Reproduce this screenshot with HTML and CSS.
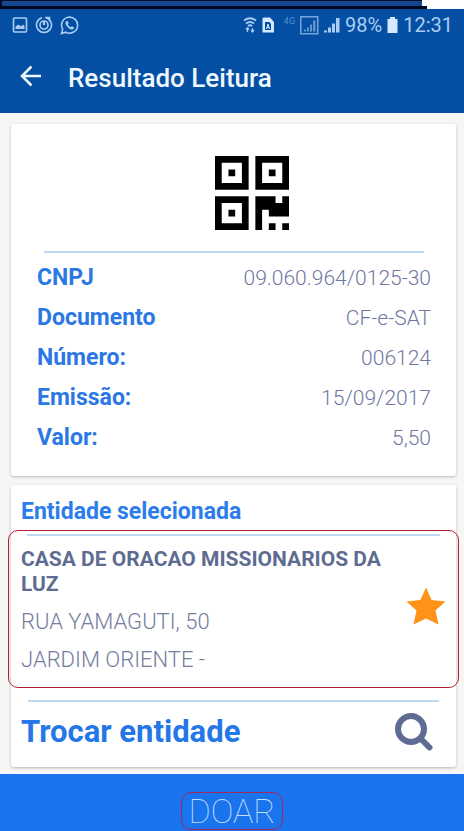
FILE: index.html
```html
<!DOCTYPE html>
<html lang="pt-BR">
<head>
<meta charset="utf-8">
<meta name="viewport" content="width=device-width, initial-scale=1">
<title>Resultado Leitura</title>
<link rel="stylesheet" href="styles.css">
</head>
<body>
<div class="top-edge"><div class="top-edge-line"></div><div class="top-edge-base"></div></div>
<header class="header">
  <div class="status">
    <div class="status-left">
      <svg width="16" height="18" viewBox="0 0 16 18" fill="none" stroke="currentColor" stroke-width="1.6"><rect x="1.5" y="2" width="13" height="14" rx="1"/><path d="M3.500 13V10.500l3-2 2.500 2 2-2 1.500 1.500v3z" fill="currentColor" stroke="none"/></svg>
      <svg width="18" height="18" viewBox="0 0 18 18" fill="none" stroke="currentColor" stroke-width="1.600"><path d="M7 1.700A7.500 7.500 0 1 0 11 1.700"/><path d="M10 1.500h4.500V5"/><circle cx="9" cy="9" r="4"/><path d="M9 5v4" stroke-width="2.200"/></svg>
      <svg width="19" height="19" viewBox="0 0 19 19" fill="none" stroke="currentColor" stroke-width="1.600"><path d="M1.500 17.500l1.200-4.300a8 8 0 1 1 3.100 3z"/><path d="M6.200 5.200l1.500-.3 1 2.300-.9 1.100c.7 1.400 1.700 2.300 3 2.900l1.100-1 2.100 1.100c0 1.700-1 2.300-2.100 2.300C8.800 13 5.500 9.800 5.400 6.800c0-.7.300-1.200.8-1.600z" fill="currentColor" stroke="none"/></svg>
    </div>
    <div class="status-right">
      <svg width="14" height="16" viewBox="0 0 14 16" fill="none" stroke="currentColor" stroke-width="1.800"><path d="M1 3.500q6-4.500 12 0M3 6.500q4-3 8 0M5 9q2-1.500 4 0"/><path d="M4.500 15v-4M3 12.500l1.500-1.800L6 12.500M9.500 11v4M8 13.200l1.500 1.800 1.500-1.800" stroke-width="1.300"/></svg>
      <svg class="sim" width="12" height="16" viewBox="0 0 12 16"><path d="M1.500.5H8L12 5v10.500H.5v-14z" fill="currentColor"/><path d="M3 5h4.500L9 7v6H3z" fill="#044fa3"/><path d="M4.500 12l1.500-5 1.500 5M5 10.500h2" fill="none" stroke="currentColor"/></svg>
      <span class="network">4G</span>
      <svg class="boxed" width="19" height="19" viewBox="0 0 19 19"><rect x=".8" y=".8" width="17" height="17" fill="none" stroke="currentColor" stroke-width="1.300"/><path d="M4 15.500v-2h2v2zm3 0v-4h2v4zm3 0v-7h2v7zm3 0v-11h2.500v11z" fill="currentColor" opacity=".7"/></svg>
      <svg width="16" height="16" viewBox="0 0 16 16" fill="currentColor"><path d="M0 15.500v-2h3v2zm4 0v-5h3v5zm4 0V6.500h3v9zm4 0V1h3.500v14.500z"/></svg>
      <span class="clock">98%</span>
      <svg class="battery" width="11" height="16" viewBox="0 0 11 16" fill="currentColor"><path d="M3 0h5v2h2.500v14H.5V2H3z"/></svg>
      <span class="clock">12:31</span>
    </div>
  </div>
  <div class="toolbar">
    <button class="icon-button" type="button" aria-label="Voltar"><svg width="22" height="22" viewBox="0 0 22 22" fill="none" stroke="currentColor" stroke-width="2.500"><path d="M21 11H2.500M11.500 1.500L2 11l9.500 9.500"/></svg></button>
    <h1>Resultado Leitura</h1>
  </div>
</header>
<main>
  <section class="card receipt">
    <div class="code"><svg width="74" height="74" viewBox="0 0 11 11" role="img" aria-label="QR Code" fill="#000"><path fill-rule="evenodd" d="M0 0h5v5H0zM1 1v3h3V1zM2 2h1v1H2zM6 0h5v5H6zM7 1v3h3V1zM8 2h1v1H8zM0 6h5v5H0zM1 7v3h3V7zM2 8h1v1H2z"/><path d="M6 6h3v1h1V6h1v3H8V8H7v3H6zM8 10h1v1H8zM10 10h1v1h-1z"/></svg></div>
    <hr>
    <dl>
      <div><dt>CNPJ</dt><dd>09.060.964/0125-30</dd></div>
      <div><dt>Documento</dt><dd>CF-e-SAT</dd></div>
      <div><dt>Número:</dt><dd>006124</dd></div>
      <div><dt>Emissão:</dt><dd>15/09/2017</dd></div>
      <div><dt>Valor:</dt><dd>5,50</dd></div>
    </dl>
  </section>
  <section class="card entity">
    <h2>Entidade selecionada</h2>
    <article class="selected">
      <hr>
      <div class="selected-body">
        <div class="details">
          <h3>CASA DE ORACAO MISSIONARIOS DA LUZ</h3>
          <p>RUA YAMAGUTI, 50</p>
          <p>JARDIM ORIENTE -</p>
        </div>
        <button class="icon-button" type="button" aria-label="Favorito"><svg width="40" height="38" viewBox="0 0 40 38" fill="#ff9218"><path d="M20 .5l5.600 12.600L39.500 14.500 29.500 23.500 32.500 37.500 20 31.500 7.500 37.500 10.500 23.500.5 14.500 14.400 13.100z"/></svg></button>
      </div>
    </article>
    <hr>
    <a class="change" href="#trocar"><span>Trocar entidade</span><svg width="38" height="38" viewBox="0 0 38 38" fill="none" stroke="#5e6b93"><circle cx="16" cy="16" r="13" stroke-width="6"/><path d="M26 26l8.500 8.500" stroke-width="6" stroke-linecap="round"/></svg></a>
  </section>
</main>
<footer><button class="donate" type="button">DOAR</button></footer>
</body>
</html>
```
FILE: styles.css
```css
* { box-sizing: border-box; }
body {
  margin: 0;
  min-height: 100vh;
  display: flex;
  flex-direction: column;
  background: #f6f6f7;
  font-family: Roboto, "Liberation Sans", sans-serif;
}
h1, h2, h3, p, dl, dd { margin: 0; }
button { padding: 0; border: 0; background: none; font: inherit; color: inherit; }
svg { display: block; flex: none; }
.top-edge { background: #fff; }
.top-edge-line {
  width: 91%;
  height: 6px;
  background: #15468f;
  border-top: 1px solid #020a24;
  border-left: 2px solid #020a24;
}
.top-edge-base { width: 92%; height: 3px; background: #000820; }
.header { height: 104px; background: #044fa3; color: #f0f8ff; }
.status {
  display: flex;
  justify-content: space-between;
  height: 32px;
  padding: 0 11px 0 12px;
  color: #a9cdf2;
}
.status-left, .status-right { display: flex; align-items: center; }
.status-left { gap: 7px; }
.status-right { gap: 5px; }
.network { font-size: 9px; line-height: 24px; align-self: flex-start; margin-left: 5px; opacity: .5; }
.boxed { opacity: .8; }
.clock { font-size: 20px; line-height: 24px; }
.sim, .battery { color: #d4e8ff; }
.toolbar { display: flex; align-items: center; gap: 26px; height: 72px; padding: 2px 20px 0; }
.toolbar .icon-button { margin-bottom: 4px; }
h1 { font-size: 26px; line-height: 32px; font-weight: 500; }
main { padding: 11px 8px 7px 11px; display: flex; flex-direction: column; gap: 9px; flex: 1; }
.card { background: #fff; border-radius: 3px; box-shadow: 0 1px 3px rgba(0, 0, 0, .25); }
hr { height: 2px; border: 0; margin: 0; background: #bfdaf0; }
.receipt { padding: 32px 25px 18px 26px; }
.code { display: flex; justify-content: center; padding: 0 0 21px 36px; }
.receipt hr { margin: 0 7px 5px; }
dl > div { display: flex; justify-content: space-between; line-height: 40px; }
dt { font-size: 23px; font-weight: 700; color: #2b78e4; }
dd { font-size: 21px; font-weight: 300; color: #6f789f; }
.entity { display: flex; flex-direction: column; }
h2 { padding: 11px 10px 2px; font-size: 23px; line-height: 32px; font-weight: 700; color: #2b7cec; }
.selected { margin: 0 -3px; padding: 3px 12px 8px; border: 1px solid #b0202c; border-radius: 10px; }
.selected hr { margin: 0 6px 11px; }
.entity > hr { margin: 12px 17px 0; }
.selected-body { display: flex; justify-content: space-between; align-items: flex-start; }
.selected-body .icon-button { margin-top: 40px; }
.details { flex: 1; }
h3 { margin-bottom: 6px; font-size: 21px; line-height: 25px; font-weight: 700; color: #5f6c92; }
.details p { font-size: 22px; line-height: 38px; font-weight: 300; color: #747d9c; }
.change {
  display: flex;
  align-items: center;
  justify-content: space-between;
  padding: 10px 23px 15px 10px;
  font-size: 31px;
  line-height: 40px;
  font-weight: 700;
  color: #2577e8;
  text-decoration: none;
}
footer { display: flex; justify-content: center; padding: 18px 0 1px; background: #1974ee; }
.donate {
  height: 38px;
  padding: 0 6px;
  border: 1px solid #a3285f;
  border-radius: 10px;
  font-size: 34px;
  line-height: 36px;
  font-weight: 100;
  color: #c4dfff;
}
```
